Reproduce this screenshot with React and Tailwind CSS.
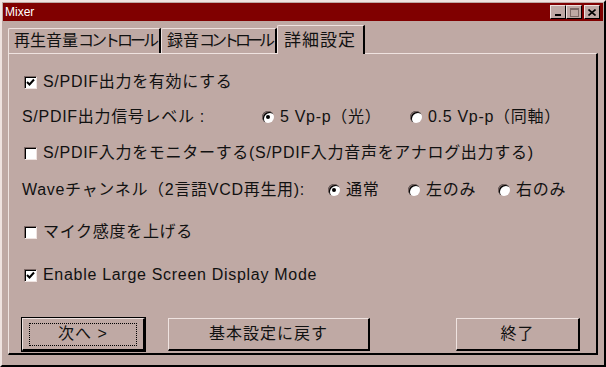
import React from "react";

// Win9x-style "Mixer" dialog, advanced-settings tab.
const FONT = { fontFamily: '"Liberation Sans", "Noto Sans CJK JP", sans-serif' };

function Check({ checked }) {
  return (
    <span className="flex h-[13px] w-[13px] shrink-0 items-center justify-center border-t border-l border-t-[#7d6966] border-l-[#7d6966] border-b border-r border-b-[#efe3e0] border-r-[#efe3e0] bg-white shadow-[inset_1px_1px_0_#000]">
      {checked ? (
        <svg width="9" height="9" viewBox="0 0 9 9">
          <path d="M1 4 L3.5 6.5 L8 1.5" fill="none" stroke="#000" strokeWidth="2" />
        </svg>
      ) : null}
    </span>
  );
}

function Radio({ checked }) {
  return (
    <span className="relative flex h-[12px] w-[12px] shrink-0 items-center justify-center rounded-full bg-white shadow-[inset_1px_1px_0_#7d6966,inset_2px_2px_0_#000]">
      {checked ? <span className="h-[4px] w-[4px] rounded-full bg-black" /> : null}
    </span>
  );
}

function CheckRow({ checked, children, className = "" }) {
  return (
    <div className={`flex h-[24px] items-center gap-[6px] pl-[2px] ${className}`}>
      <Check checked={checked} />
      <span className="whitespace-nowrap">{children}</span>
    </div>
  );
}

function RadioOpt({ checked, width, children }) {
  return (
    <div className={`flex items-center gap-[6px] ${width}`}>
      <Radio checked={checked} />
      <span className="whitespace-nowrap">{children}</span>
    </div>
  );
}

function Button({ children, focused, className = "" }) {
  return (
    <div
      className={`flex h-[33px] items-center justify-center border-t border-l border-t-[#efe3e0] border-l-[#efe3e0] border-b-2 border-r-2 border-b-black border-r-black ${focused ? "outline outline-1 outline-black" : ""} ${className}`}
    >
      <div className={`flex h-[23px] items-center justify-center px-[8px] ${focused ? "w-[108px] border border-dotted border-black" : ""}`}>
        <span className="text-[16px] tracking-[1px]">{children}</span>
      </div>
    </div>
  );
}

function Tab({ active, children, className = "" }) {
  return (
    <div
      className={`flex items-center whitespace-nowrap border-t border-l border-t-[#efe3e0] border-l-[#efe3e0] border-r-2 border-r-black rounded-tl-[2px] ${active ? "relative z-10 -mb-[1px] h-[29px] bg-[#bfa9a4] px-[6px]" : "h-[25px] px-[5px]"} ${className}`}
    >
      <span className="text-[16px] leading-none">{children}</span>
    </div>
  );
}

export default function App() {
  return (
    <div style={FONT} className="h-[367px] w-[606px] overflow-hidden text-[#111]">
      <div className="flex h-[367px] w-[606px] flex-col border-t-2 border-l-2 border-t-[#efe3e0] border-l-[#efe3e0] border-b-2 border-r-2 border-b-black border-r-black bg-[#bfa9a4] p-[1px]">
        {/* title bar */}
        <div className="flex h-[18px] items-center justify-between bg-[#800000] pl-[2px] pr-[3px]">
          <span className="text-[12px] text-white">Mixer</span>
          <div className="flex items-center">
            {["min", "max", "close"].map((k) => (
              <div
                key={k}
                className={`flex h-[14px] w-[16px] items-center justify-center border-t border-l border-t-[#efe3e0] border-l-[#efe3e0] border-b border-r border-b-black border-r-black bg-[#bfa9a4] ${k === "close" ? "ml-[2px]" : ""}`}
              >
                {k === "min" ? <span className="mt-[6px] h-[2px] w-[6px] bg-black" /> : null}
                {k === "max" ? <span className="h-[9px] w-[9px] border border-t-2 border-[#7d6966]" /> : null}
                {k === "close" ? (
                  <svg width="8" height="7" viewBox="0 0 8 7">
                    <path d="M0.5 0.5 L7.5 6.5 M7.5 0.5 L0.5 6.5" stroke="#000" strokeWidth="1.6" />
                  </svg>
                ) : null}
              </div>
            ))}
          </div>
        </div>

        {/* tabs */}
        <div className="ml-[5px] mr-[8px] mt-[4px] flex items-end">
          <Tab className="w-[153px]">
            再生音量<span className="tracking-[-3px]">コントロール</span>
          </Tab>
          <Tab className="w-[116px]">
            録音<span className="tracking-[-4px]">コントロール</span>
          </Tab>
          <Tab active className="w-[88px]">
            <span className="text-[17px] tracking-[1px]">詳細設定</span>
          </Tab>
        </div>

        {/* panel */}
        <div className="mx-[5px] flex flex-1 flex-col border-t border-l border-t-[#efe3e0] border-l-[#efe3e0] border-b-2 border-r-2 border-b-black border-r-black px-[13px] pb-[1px] text-[16px] tracking-[0.7px]">
          <CheckRow checked className="mt-[16px]">
            S/PDIF出力を有効にする
          </CheckRow>

          <div className="mt-[11px] flex h-[24px] items-center">
            <span className="w-[240px] whitespace-nowrap">S/PDIF出力信号レベル :</span>
            <RadioOpt checked width="w-[148px]">5 Vp-p（光）</RadioOpt>
            <RadioOpt width="">0.5 Vp-p（同軸）</RadioOpt>
          </div>

          <CheckRow className="mt-[12px]">
            S/PDIF入力をモニターする(S/PDIF入力音声をアナログ出力する)
          </CheckRow>

          <div className="mt-[13px] flex h-[24px] items-center">
            <span className="w-[306px] whitespace-nowrap">Waveチャンネル（2言語VCD再生用):</span>
            <RadioOpt checked width="w-[80px]">通常</RadioOpt>
            <RadioOpt width="w-[90px]">左のみ</RadioOpt>
            <RadioOpt width="">右のみ</RadioOpt>
          </div>

          <CheckRow className="mt-[18px]">マイク感度を上げる</CheckRow>

          <CheckRow checked className="mt-[19px]">
            Enable Large Screen Display Mode
          </CheckRow>

          <div className="mt-auto mb-[1px] flex items-center">
            <Button focused className="w-[123px]">次へ &gt;</Button>
            <Button className="ml-[23px] w-[202px]">基本設定に戻す</Button>
            <Button className="ml-[86px] w-[124px]">終了</Button>
          </div>
        </div>
        <div className="h-[9px]" />
      </div>
    </div>
  );
}
